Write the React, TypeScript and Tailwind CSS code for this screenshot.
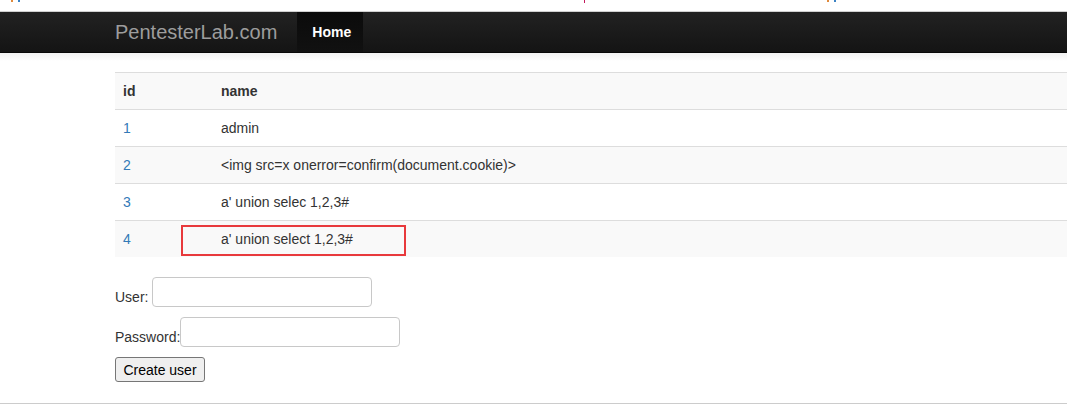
import React from "react";

const rows = [
  { id: "1", name: "admin" },
  { id: "2", name: "<img src=x onerror=confirm(document.cookie)>" },
  { id: "3", name: "a' union selec 1,2,3#" },
  { id: "4", name: "a' union select 1,2,3#" },
];

export default function App() {
  return (
    <div
      className="relative w-[1067px] h-[404px] overflow-hidden bg-white text-[14px] text-[#333]"
      style={{ fontFamily: '"Liberation Sans", Arial, Helvetica, sans-serif' }}
    >
      {/* tiny cut-off marks at the very top */}
      <span className="absolute left-[11px] top-0 w-[2px] h-[2px] bg-[#e08a3c]" />
      <span className="absolute left-[18px] top-0 w-[2px] h-[2px] bg-[#3b82c4]" />
      <span className="absolute left-[584px] top-0 w-[1px] h-[3px] bg-[#c2185b]" />
      <span className="absolute left-[827px] top-0 w-[2px] h-[2px] bg-[#e08a3c]" />
      <span className="absolute left-[834px] top-0 w-[2px] h-[2px] bg-[#3b82c4]" />

      <div className="h-[11px]" />

      {/* navbar */}
      <div className="h-[42px] border-t border-t-[#d0d0d0] border-b border-b-[#080808] bg-gradient-to-b from-[#222222] to-[#141414] flex items-stretch pl-[115px]">
        <div className="flex items-center text-[20px] text-[#9d9d9d] pr-[20px]">
          PentesterLab.com
        </div>
        <div className="flex items-center px-[15px] bg-gradient-to-b from-[#0b0b0b] to-[#111111] text-white font-bold text-[14px] w-[66px]">
          Home
        </div>
      </div>
      <div className="h-[8px] bg-gradient-to-b from-[#f2f2f2] to-white" />

      <div className="pl-[115px] pt-[11px]">
        {/* table */}
        <div className="relative w-full">
          <div className="border-t border-[#dddddd] bg-[#f9f9f9] flex h-[37px] items-center font-bold">
            <div className="w-[98px] pl-[8px]">id</div>
            <div className="pl-[8px]">name</div>
          </div>
          {rows.map((r, i) => (
            <div
              key={r.id}
              className={
                "border-t border-[#dddddd] flex h-[37px] items-center " +
                (i % 2 === 1 ? "bg-[#f9f9f9]" : "bg-white")
              }
            >
              <div className="w-[98px] pl-[8px] text-[#337ab7]">{r.id}</div>
              <div className="pl-[8px]">{r.name}</div>
            </div>
          ))}
          <div className="absolute left-[66px] top-[153px] w-[225px] h-[31px] border-2 border-[#e8393c]" />
        </div>

        {/* form */}
        <div className="mt-[20px] flex items-end">
          <span className="leading-5">User:</span>
          <input
            className="ml-[4px] w-[220px] h-[30px] border border-[#c8c8c8] rounded-[4px] px-2 outline-none"
            type="text"
          />
        </div>
        <div className="mt-[10px] flex items-end">
          <span className="leading-5">Password:</span>
          <input
            className="ml-0 w-[220px] h-[30px] border border-[#c8c8c8] rounded-[4px] px-2 outline-none"
            type="password"
          />
        </div>
        <div className="mt-[10px]">
          <button className="w-[90px] h-[25px] bg-[#efefef] border border-[#767676] rounded-[3px] text-[14px] text-black leading-none">
            Create user
          </button>
        </div>
      </div>

      <div className="absolute left-0 right-0 top-[403px] h-[1px] bg-[#cccccc]" />
    </div>
  );
}
